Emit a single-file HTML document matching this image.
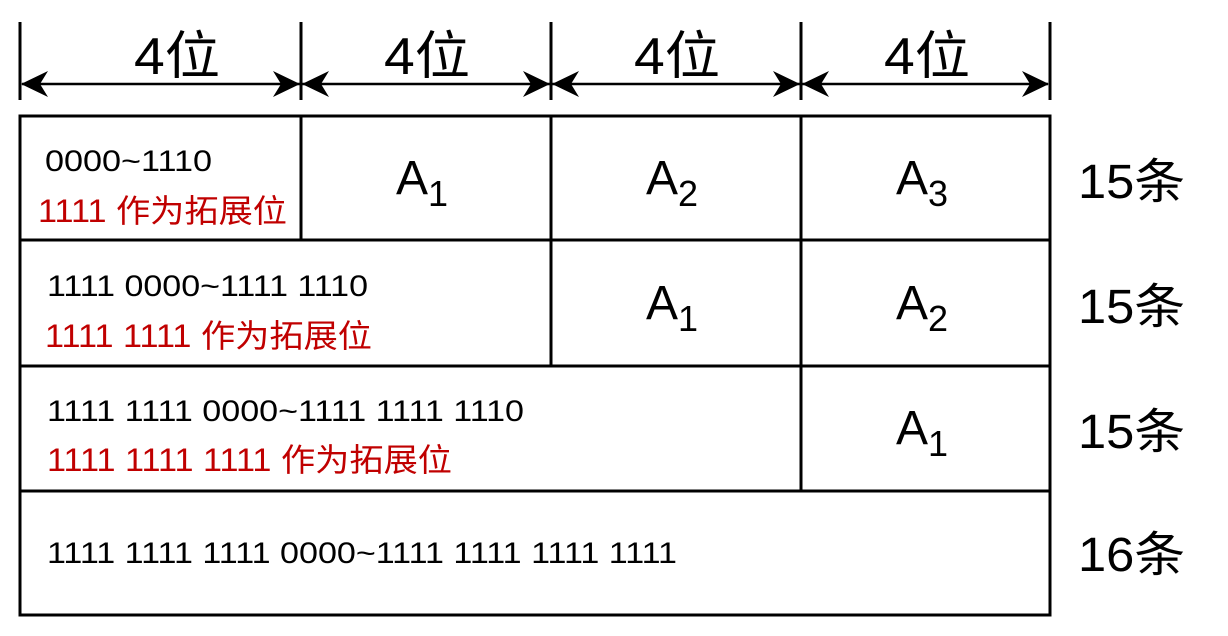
<!DOCTYPE html>
<html><head><meta charset="utf-8"><style>body{margin:0;background:#fff}svg{display:block}</style></head><body>
<svg width="1228" height="636" viewBox="0 0 1228 636" xmlns="http://www.w3.org/2000/svg" font-family="Liberation Sans, Noto Sans CJK SC, sans-serif">
<g stroke="#000" stroke-width="3" fill="none">
<line x1="20" y1="22" x2="20" y2="100"/><line x1="301" y1="22" x2="301" y2="100"/><line x1="551" y1="22" x2="551" y2="100"/><line x1="801" y1="22" x2="801" y2="100"/><line x1="1050" y1="22" x2="1050" y2="100"/>
<line x1="22" y1="84" x2="1048" y2="84" stroke-width="2.5"/>
<rect x="20" y="116" width="1030" height="499"/>
<line x1="20" y1="240" x2="1050" y2="240"/><line x1="20" y1="366" x2="1050" y2="366"/><line x1="20" y1="491" x2="1050" y2="491"/>
<line x1="301" y1="116" x2="301" y2="240"/><line x1="551" y1="116" x2="551" y2="366"/><line x1="801" y1="116" x2="801" y2="491"/>
</g>
<g fill="#000">
<path d="M21 84 L48 71 L40 84 L48 97Z"/><path d="M300 84 L273 71 L281 84 L273 97Z"/>
<path d="M302 84 L329 71 L321 84 L329 97Z"/><path d="M550 84 L523 71 L531 84 L523 97Z"/>
<path d="M552 84 L579 71 L571 84 L579 97Z"/><path d="M800 84 L773 71 L781 84 L773 97Z"/>
<path d="M802 84 L829 71 L821 84 L829 97Z"/><path d="M1049 84 L1022 71 L1030 84 L1022 97Z"/>
</g>
<g font-size="52" fill="#000" lengthAdjust="spacingAndGlyphs">
<text x="134" y="74" textLength="86" lengthAdjust="spacingAndGlyphs">4位</text>
<text x="384" y="74" textLength="86" lengthAdjust="spacingAndGlyphs">4位</text>
<text x="634" y="74" textLength="86" lengthAdjust="spacingAndGlyphs">4位</text>
<text x="884" y="74" textLength="86" lengthAdjust="spacingAndGlyphs">4位</text>
</g>
<g font-size="30" fill="#000">
<text x="45" y="171" textLength="167" lengthAdjust="spacingAndGlyphs">0000~1110</text>
<text x="47" y="296" textLength="321" lengthAdjust="spacingAndGlyphs">1111 0000~1111 1110</text>
<text x="47" y="421" textLength="477" lengthAdjust="spacingAndGlyphs">1111 1111 0000~1111 1111 1110</text>
<text x="47" y="563" textLength="630" lengthAdjust="spacingAndGlyphs">1111 1111 1111 0000~1111 1111 1111 1111</text>
</g>
<g font-size="32" fill="#c00000">
<text x="38" y="222" textLength="249" lengthAdjust="spacingAndGlyphs">1111 作为拓展位</text>
<text x="45" y="347" textLength="327" lengthAdjust="spacingAndGlyphs">1111 1111 作为拓展位</text>
<text x="47" y="471" textLength="405" lengthAdjust="spacingAndGlyphs">1111 1111 1111 作为拓展位</text>
</g>
<g font-size="48" fill="#000">
<text x="396" y="194">A<tspan font-size="36" dy="12">1</tspan></text>
<text x="646" y="194">A<tspan font-size="36" dy="12">2</tspan></text>
<text x="896" y="194">A<tspan font-size="36" dy="12">3</tspan></text>
<text x="646" y="319">A<tspan font-size="36" dy="12">1</tspan></text>
<text x="896" y="319">A<tspan font-size="36" dy="12">2</tspan></text>
<text x="896" y="444">A<tspan font-size="36" dy="12">1</tspan></text>
<text x="1078" y="198" textLength="107" lengthAdjust="spacingAndGlyphs">15条</text>
<text x="1078" y="323" textLength="107" lengthAdjust="spacingAndGlyphs">15条</text>
<text x="1078" y="448" textLength="107" lengthAdjust="spacingAndGlyphs">15条</text>
<text x="1078" y="571" textLength="107" lengthAdjust="spacingAndGlyphs">16条</text>
</g>
</svg>
</body></html>
